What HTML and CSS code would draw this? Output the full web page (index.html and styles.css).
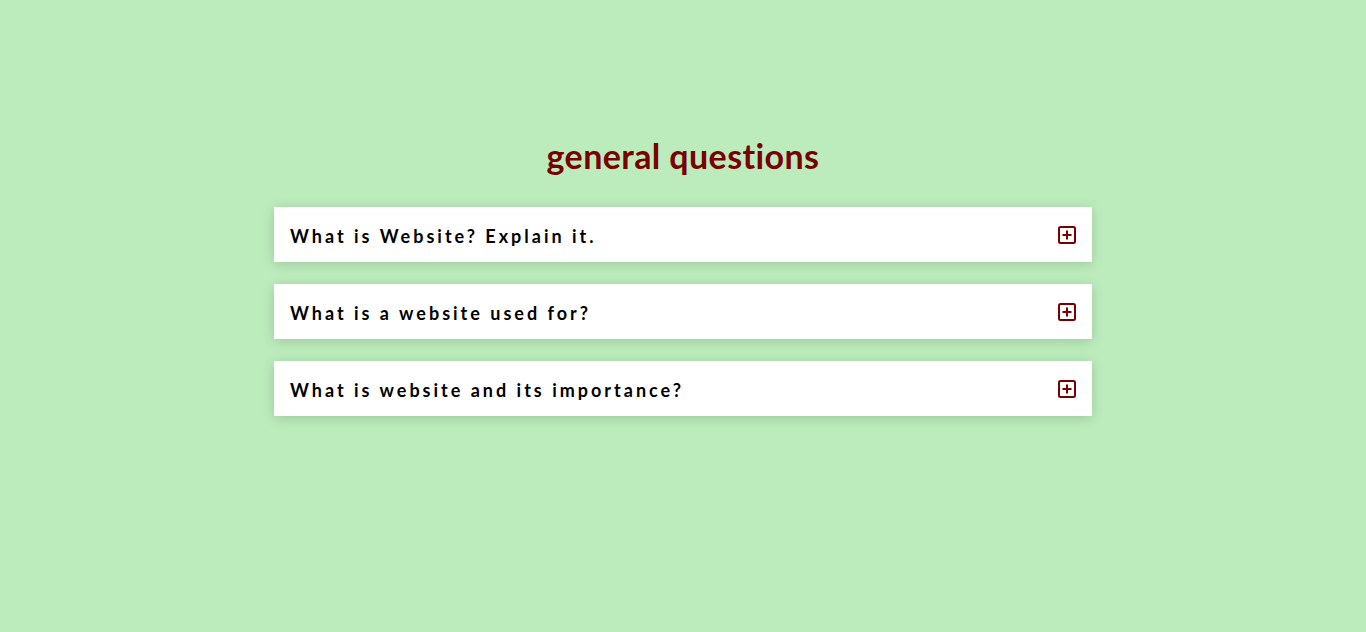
FILE: index.html
```html
<!DOCTYPE html>
<html lang="en">
<head>
<meta charset="utf-8">
<title>FAQ</title>
<link rel="stylesheet" href="styles.css">
</head>
<body>
<main class="faq">
  <h1 class="faq-title">general questions</h1>
  <div class="faq-list">
    <div class="faq-item">
      <span class="faq-q">What is Website? Explain it.</span>
      <svg class="faq-icon" viewBox="0 0 18 18" width="18" height="18" aria-hidden="true"><rect x="1" y="1" width="16" height="16" rx="1.5" fill="none" stroke="#7a0000" stroke-width="2"/><path d="M9 4.5v9M4.5 9h9" stroke="#7a0000" stroke-width="2"/></svg>
    </div>
    <div class="faq-item">
      <span class="faq-q">What is a website used for?</span>
      <svg class="faq-icon" viewBox="0 0 18 18" width="18" height="18" aria-hidden="true"><rect x="1" y="1" width="16" height="16" rx="1.5" fill="none" stroke="#7a0000" stroke-width="2"/><path d="M9 4.5v9M4.5 9h9" stroke="#7a0000" stroke-width="2"/></svg>
    </div>
    <div class="faq-item">
      <span class="faq-q">What is website and its importance?</span>
      <svg class="faq-icon" viewBox="0 0 18 18" width="18" height="18" aria-hidden="true"><rect x="1" y="1" width="16" height="16" rx="1.5" fill="none" stroke="#7a0000" stroke-width="2"/><path d="M9 4.5v9M4.5 9h9" stroke="#7a0000" stroke-width="2"/></svg>
    </div>
  </div>
</main>
</body>
</html>
```
FILE: styles.css
```css
* { box-sizing: border-box; }
html, body { margin: 0; padding: 0; }
body {
  background: #bcecbc;
  font-family: "Comic Sans MS", "Lato", "Open Sans", sans-serif;
  min-height: 632px;
}
.faq {
  width: 818px;
  margin: 0 auto;
  padding-top: 134px;
  display: flex;
  flex-direction: column;
}
.faq-title {
  margin: 0 0 29px;
  text-align: center;
  color: #7a0000;
  font-size: 34px;
  font-weight: 700;
  line-height: 44px;
  letter-spacing: 0.4px;
}
.faq-list {
  display: flex;
  flex-direction: column;
  gap: 22px;
}
.faq-item {
  background: #fff;
  height: 55px;
  padding: 0 16px;
  display: flex;
  align-items: center;
  justify-content: space-between;
  box-shadow: 0 2px 12px rgba(0,0,0,0.16);
}
.faq-q {
  font-size: 18px;
  font-weight: 700;
  letter-spacing: 3px;
  color: #000;
  padding-top: 2px;
}
.faq-icon { display: block; }
```
